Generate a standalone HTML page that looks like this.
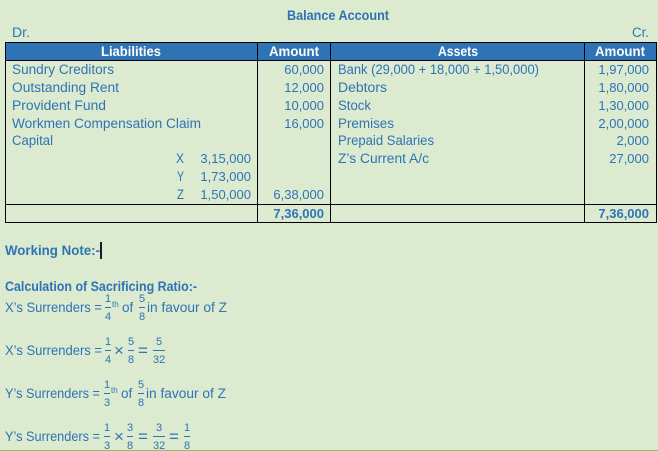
<!DOCTYPE html>
<html><head><meta charset="utf-8"><style>
html,body{margin:0;padding:0;background:#dcead0}
svg{display:block}
text{font-family:"Liberation Sans",sans-serif;font-size:13.5px;fill:#2e74b5}
.b{font-weight:bold}
.w{fill:#fff;font-weight:bold}
.s{font-size:11px}
.t{font-size:8px}
.o{font-size:17px}
.n{font-size:13px}
</style></head><body>
<svg width="658" height="451" viewBox="0 0 658 451" xmlns="http://www.w3.org/2000/svg">
<rect width="658" height="451" fill="#dcead0"/>
<text class="b" x="287" y="20" textLength="102" lengthAdjust="spacingAndGlyphs">Balance Account</text>
<text x="12" y="37" textLength="18" lengthAdjust="spacingAndGlyphs">Dr.</text>
<text x="632" y="37" textLength="17" lengthAdjust="spacingAndGlyphs">Cr.</text>
<rect x="6" y="43" width="651" height="18" fill="#2e74b5"/>
<g stroke="#000" stroke-width="1" fill="none">
<rect x="5.5" y="42.5" width="651" height="180"/>
<path d="M5.5 60.5H656.5M5.5 204.5H656.5M257.5 42.5V222.5M330.5 42.5V222.5M584.5 42.5V222.5"/>
</g>
<text class="w" x="101" y="56" textLength="60" lengthAdjust="spacingAndGlyphs">Liabilities</text>
<text class="w" x="269" y="56" textLength="50" lengthAdjust="spacingAndGlyphs">Amount</text>
<text class="w" x="438" y="56" textLength="40" lengthAdjust="spacingAndGlyphs">Assets</text>
<text class="w" x="595" y="56" textLength="50" lengthAdjust="spacingAndGlyphs">Amount</text>
<text x="12" y="74" textLength="102" lengthAdjust="spacingAndGlyphs">Sundry Creditors</text>
<text x="12" y="92" textLength="107" lengthAdjust="spacingAndGlyphs">Outstanding Rent</text>
<text x="12" y="110" textLength="94" lengthAdjust="spacingAndGlyphs">Provident Fund</text>
<text x="12" y="128" textLength="189" lengthAdjust="spacingAndGlyphs">Workmen Compensation Claim</text>
<text x="12" y="145" textLength="41" lengthAdjust="spacingAndGlyphs">Capital</text>
<text x="176" y="163" textLength="8" lengthAdjust="spacingAndGlyphs">X</text>
<text x="177" y="181" textLength="7" lengthAdjust="spacingAndGlyphs">Y</text>
<text x="177" y="199" textLength="7" lengthAdjust="spacingAndGlyphs">Z</text>
<g text-anchor="end">
<text class="n" x="251" y="163">3,15,000</text>
<text class="n" x="251" y="181">1,73,000</text>
<text class="n" x="251" y="199">1,50,000</text>
<text class="n" x="324" y="74">60,000</text>
<text class="n" x="324" y="92">12,000</text>
<text class="n" x="324" y="110">10,000</text>
<text class="n" x="324" y="128">16,000</text>
<text class="n" x="324" y="199">6,38,000</text>
<text class="n b" x="324" y="218">7,36,000</text>
<text class="n" x="649" y="74">1,97,000</text>
<text class="n" x="649" y="92">1,80,000</text>
<text class="n" x="649" y="110">1,30,000</text>
<text class="n" x="649" y="128">2,00,000</text>
<text class="n" x="649" y="145">2,000</text>
<text class="n" x="649" y="163">27,000</text>
<text class="n b" x="649" y="218">7,36,000</text>
</g>
<text x="338" y="74" textLength="201" lengthAdjust="spacingAndGlyphs">Bank (29,000 + 18,000 + 1,50,000)</text>
<text x="338" y="92" textLength="49" lengthAdjust="spacingAndGlyphs">Debtors</text>
<text x="338" y="110" textLength="33" lengthAdjust="spacingAndGlyphs">Stock</text>
<text x="338" y="128" textLength="56" lengthAdjust="spacingAndGlyphs">Premises</text>
<text x="338" y="145" textLength="96" lengthAdjust="spacingAndGlyphs">Prepaid Salaries</text>
<text x="338" y="163" textLength="91" lengthAdjust="spacingAndGlyphs">Z’s Current A/c</text>

<text class="b" x="5" y="255" textLength="95" lengthAdjust="spacingAndGlyphs">Working Note:-</text>
<rect x="100" y="242" width="2" height="17" fill="#1a1a2e"/>
<text class="b" x="5" y="291" textLength="192" lengthAdjust="spacingAndGlyphs">Calculation of Sacrificing Ratio:-</text>

<text x="5" y="312" textLength="97" lengthAdjust="spacingAndGlyphs">X’s Surrenders =</text>
<text class="s" x="105" y="302">1</text><rect x="105" y="307" width="6" height="1" fill="#2e74b5"/><text class="s" x="105" y="320">4</text>
<text class="t" x="112" y="307">th</text>
<text x="122" y="312">of</text>
<text class="s" x="139" y="302">5</text><rect x="139" y="307" width="6" height="1" fill="#2e74b5"/><text class="s" x="139" y="320">8</text>
<text x="147" y="312" textLength="80" lengthAdjust="spacingAndGlyphs">in favour of Z</text>

<text x="5" y="355" textLength="97" lengthAdjust="spacingAndGlyphs">X’s Surrenders =</text>
<text class="s" x="105" y="345">1</text><rect x="105" y="350" width="6" height="1" fill="#2e74b5"/><text class="s" x="105" y="363">4</text>
<text class="o" x="114" y="356">×</text>
<text class="s" x="128" y="345">5</text><rect x="128" y="350" width="6" height="1" fill="#2e74b5"/><text class="s" x="128" y="363">8</text>
<text class="o" x="138" y="356">=</text>
<text class="s" x="156" y="345">5</text><rect x="153" y="350" width="12" height="1" fill="#2e74b5"/><text class="s" x="153" y="363">32</text>

<text x="5" y="398" textLength="95" lengthAdjust="spacingAndGlyphs">Y’s Surrenders =</text>
<text class="s" x="104" y="388">1</text><rect x="104" y="393" width="6" height="1" fill="#2e74b5"/><text class="s" x="104" y="406">3</text>
<text class="t" x="111" y="393">th</text>
<text x="121" y="398">of</text>
<text class="s" x="138" y="388">5</text><rect x="138" y="393" width="6" height="1" fill="#2e74b5"/><text class="s" x="138" y="406">8</text>
<text x="146" y="398" textLength="80" lengthAdjust="spacingAndGlyphs">in favour of Z</text>

<text x="5" y="441" textLength="95" lengthAdjust="spacingAndGlyphs">Y’s Surrenders =</text>
<text class="s" x="104" y="431">1</text><rect x="104" y="436" width="6" height="1" fill="#2e74b5"/><text class="s" x="104" y="449">3</text>
<text class="o" x="114" y="442">×</text>
<text class="s" x="127" y="431">3</text><rect x="127" y="436" width="6" height="1" fill="#2e74b5"/><text class="s" x="127" y="449">8</text>
<text class="o" x="138" y="442">=</text>
<text class="s" x="156" y="431">3</text><rect x="153" y="436" width="12" height="1" fill="#2e74b5"/><text class="s" x="153" y="449">32</text>
<text class="o" x="169" y="442">=</text>
<text class="s" x="184" y="431">1</text><rect x="184" y="436" width="6" height="1" fill="#2e74b5"/><text class="s" x="184" y="449">8</text>
<rect x="0" y="450" width="658" height="1" fill="#9bbb59"/>
</svg>
</body></html>
